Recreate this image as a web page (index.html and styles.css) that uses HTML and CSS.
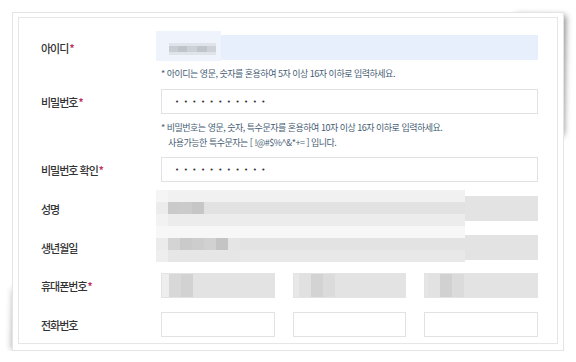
FILE: index.html
```html
<!DOCTYPE html>
<html lang="ko">
<head>
  <meta charset="UTF-8">
  <meta name="viewport" content="width=device-width, initial-scale=1.0">
  <title>회원정보 입력</title>
  <link rel="stylesheet" href="styles.css">
</head>
<body>
  <div class="sheet">
    <div class="form-box">

      <div class="row">
        <div class="label">아이디<span class="req">*</span></div>
        <div class="field field-auto">
          <div class="mosaic mosaic-id"></div>
        </div>
      </div>
      <p class="help">* 아이디는 영문, 숫자를 혼용하여 5자 이상 16자 이하로 입력하세요.</p>

      <div class="row">
        <div class="label">비밀번호<span class="req">*</span></div>
        <div class="field"><span class="dots">•••••••••••</span></div>
      </div>
      <p class="help help-tight">
        * 비밀번호는 영문, 숫자, 특수문자를 혼용하여 10자 이상 16자 이하로 입력하세요.<br>
        <span class="indent">사용가능한 특수문자는 [ !@#$%^&amp;*+= ] 입니다.</span>
      </p>

      <div class="row">
        <div class="label">비밀번호 확인<span class="req">*</span></div>
        <div class="field"><span class="dots">•••••••••••</span></div>
      </div>

      <!-- 개인정보 가림 처리 -->
      <div class="masked-group">
        <div class="row row-gap">
          <div class="label">성명</div>
          <div class="field field-gray"></div>
        </div>
        <div class="row row-gap">
          <div class="label">생년월일</div>
          <div class="field field-gray"></div>
        </div>
        <div class="mosaic mosaic-name">
          <div class="m m1"></div>
          <div class="m m2"></div>
          <div class="m m3"></div>
          <div class="m m4"></div>
          <div class="m m5"></div>
          <div class="m m6"></div>
        </div>
      </div>

      <div class="row row-gap phone-row">
        <div class="label">휴대폰번호<span class="req">*</span></div>
        <div class="field-split">
          <div class="field field-gray px1"></div>
          <div class="field field-gray px2"></div>
          <div class="field field-gray px3"></div>
        </div>
      </div>

      <div class="row row-gap">
        <div class="label">전화번호</div>
        <div class="field-split">
          <div class="field"></div>
          <div class="field"></div>
          <div class="field"></div>
        </div>
      </div>

    </div>
  </div>
</body>
</html>
```

FILE: styles.css
```css
* {
  margin: 0;
  padding: 0;
  box-sizing: border-box;
}

body {
  background: #fff;
  font-family: "Noto Sans CJK KR", "Noto Sans", sans-serif;
  color: #333;
}

/* 종이 시트 + 말린 모서리 그림자 */
.sheet {
  position: relative;
  width: 552px;
  margin: 12px 0 0 12px;
  padding: 4px 5px 6px;
  background: #fff;
  border: 1px solid #e4e4e4;
}

.sheet::before,
.sheet::after {
  content: '';
  position: absolute;
  z-index: -1;
}

.sheet::before {
  top: 4px;
  right: 3px;
  width: 50px;
  height: 120px;
  box-shadow: 5px -2px 6px rgba(0, 0, 0, 0.45);
  transform: rotate(1deg);
}

.sheet::after {
  bottom: 3px;
  left: 3px;
  width: 130px;
  height: 60px;
  box-shadow: -4px 4px 6px rgba(0, 0, 0, 0.3);
  transform: rotate(1.5deg);
}

.form-box {
  border: 1px solid #e6e6e6;
  padding: 17px 19px 6px 22px;
}

.row {
  display: grid;
  grid-template-columns: 120px 1fr;
  align-items: center;
}

.row-gap {
  margin-top: 14px;
}

.phone-row {
  margin-top: 13px;
}

.label {
  font-size: 11px;
  letter-spacing: -1px;
  font-weight: 500;
  color: #333;
}

.req {
  color: #c3305c;
  margin-left: 1px;
  font-size: 10px;
  font-weight: 700;
  position: relative;
  top: -1px;
}

.field {
  position: relative;
  height: 25px;
  border: 1px solid #e2e2e2;
  background: #fff;
  display: flex;
  align-items: center;
}

.field-auto {
  background: #e8effc;
  border-color: #e8effc;
}

.field-gray {
  background: #e3e3e3;
  border-color: #e3e3e3;
}

.field-split {
  display: grid;
  grid-template-columns: repeat(3, 1fr);
  gap: 18px;
}

.dots {
  padding-left: 13px;
  font-family: "DejaVu Sans", sans-serif;
  font-size: 7px;
  letter-spacing: 4.5px;
  color: #333;
}

.help {
  padding: 6px 0 8px 120px;
  font-size: 9px;
  line-height: 15px;
  letter-spacing: -0.5px;
  color: #465d74;
}

.help-tight {
  padding-bottom: 7px;
}

.indent {
  padding-left: 7px;
}

/* 모자이크 */
.mosaic {
  position: absolute;
  pointer-events: none;
}

.mosaic-id {
  left: -6px;
  top: -5px;
  width: 65px;
  height: 30px;
  background:
    linear-gradient(90deg, #c9ccd3 0 9px, #bfc3ca 9px 18px, #ccd0d7 18px 28px, #c0c4cb 28px 38px, #cdd1d8 38px 47px) no-repeat 13px 15px / 47px 6px,
    linear-gradient(#dfe3ea, #dfe3ea) no-repeat 13px 12px / 47px 12px,
    #eef3fc;
}

.masked-group {
  position: relative;
}

.mosaic-name {
  left: 115px;
  top: -6px;
  width: 309px;
}

.m {
  height: 12px;
  background: #ececec;
}

.m1 {
  background: linear-gradient(90deg, #f5f5f5 0 12px, #f1f1f1 12px);
}

.m2 {
  background: linear-gradient(90deg, #ececec 0 12px, #cacaca 12px 24px, #cbcbcb 24px 36px, #c6c6c6 36px 48px, #e2e2e2 48px);
}

.m3 {
  background: linear-gradient(90deg, #f2f2f2 0 12px, #ececec 12px);
}

.m4 {
  background: #f7f7f7;
}

.m5 {
  background: linear-gradient(90deg, #ebebeb 0 12px, #d4d4d4 12px 24px, #cacaca 24px 36px, #cdcdcd 36px 48px, #d1d1d1 48px 60px, #c4c4c4 60px 72px, #e5e5e5 72px 84px, #e3e3e3 84px);
}

.m6 {
  background: linear-gradient(90deg, #eeeeee 0 12px, #e6e6e6 12px 84px, #e8e8e8 84px);
}

.px1 {
  background: linear-gradient(90deg, #eeeeee 0 7px, #d8d8d8 7px 19px, #d2d2d2 19px 31px, #e3e3e3 31px);
}

.px2 {
  background: linear-gradient(90deg, #e8e8e8 0 5px, #e1e1e1 5px 17px, #d3d3d3 17px 29px, #dbdbdb 29px 41px, #e3e3e3 41px);
}

.px3 {
  background: linear-gradient(90deg, #e6e6e6 0 3px, #e2e2e2 3px 15px, #d1d1d1 15px 27px, #dbdbdb 27px 39px, #e3e3e3 39px);
}
```
